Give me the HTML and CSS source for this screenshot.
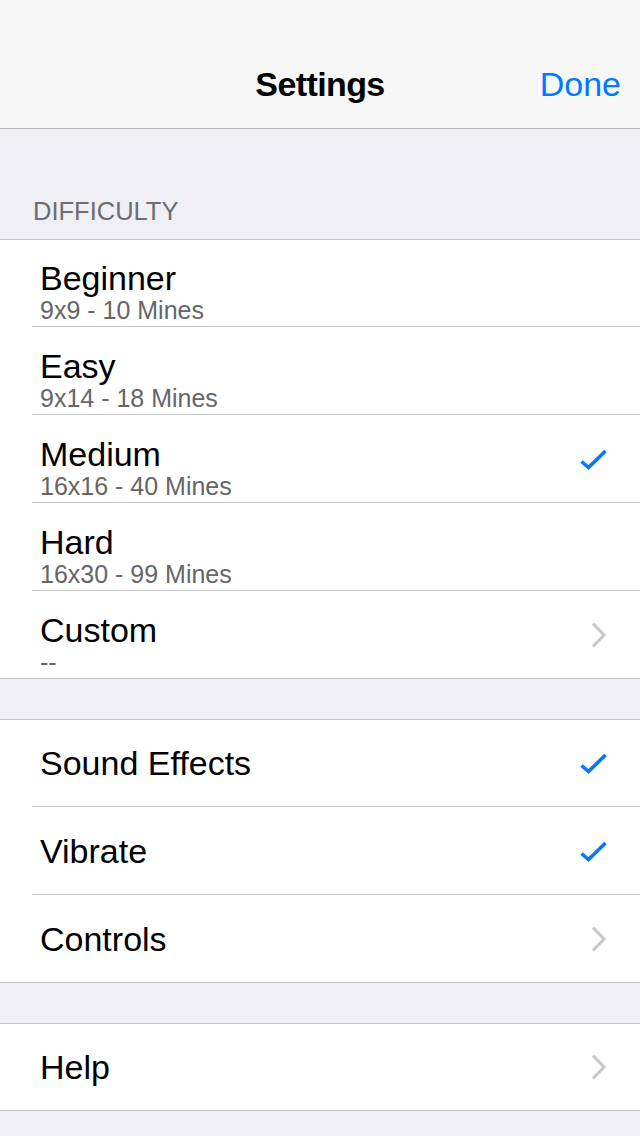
FILE: index.html
```html
<!DOCTYPE html>
<html>
<head>
<meta charset="utf-8">
<title>Settings</title>
<link rel="stylesheet" href="styles.css">
</head>
<body>
<header class="navbar">
  <div class="nav-side"></div>
  <div class="nav-title">Settings</div>
  <div class="nav-side nav-right"><span class="nav-btn">Done</span></div>
</header>

<div class="section-header"><span>DIFFICULTY</span></div>
<ul class="group">
  <li class="row row-sub">
    <div class="cell-text"><div class="title">Beginner</div><div class="subtitle">9x9 - 10 Mines</div></div>
  </li>
  <li class="row row-sub">
    <div class="cell-text"><div class="title">Easy</div><div class="subtitle">9x14 - 18 Mines</div></div>
  </li>
  <li class="row row-sub">
    <div class="cell-text"><div class="title">Medium</div><div class="subtitle">16x16 - 40 Mines</div></div>
    <svg class="check" width="30" height="22" viewBox="0 0 30 22"><path d="M1.5 13.5 L8.5 19.5 L25.5 3" fill="none" stroke="#007aff" stroke-width="3.6"/></svg>
  </li>
  <li class="row row-sub">
    <div class="cell-text"><div class="title">Hard</div><div class="subtitle">16x30 - 99 Mines</div></div>
  </li>
  <li class="row row-sub">
    <div class="cell-text"><div class="title">Custom</div><div class="subtitle">--</div></div>
    <svg class="chev" width="18" height="28" viewBox="0 0 18 28"><path d="M3 2.5 L14 14 L3 25.5" fill="none" stroke="#c7c7cc" stroke-width="3"/></svg>
  </li>
</ul>

<div class="spacer"></div>
<ul class="group">
  <li class="row">
    <div class="title">Sound Effects</div>
    <svg class="check" width="30" height="22" viewBox="0 0 30 22"><path d="M1.5 13.5 L8.5 19.5 L25.5 3" fill="none" stroke="#007aff" stroke-width="3.6"/></svg>
  </li>
  <li class="row">
    <div class="title">Vibrate</div>
    <svg class="check" width="30" height="22" viewBox="0 0 30 22"><path d="M1.5 13.5 L8.5 19.5 L25.5 3" fill="none" stroke="#007aff" stroke-width="3.6"/></svg>
  </li>
  <li class="row">
    <div class="title">Controls</div>
    <svg class="chev" width="18" height="28" viewBox="0 0 18 28"><path d="M3 2.5 L14 14 L3 25.5" fill="none" stroke="#c7c7cc" stroke-width="3"/></svg>
  </li>
</ul>

<div class="spacer"></div>
<ul class="group">
  <li class="row">
    <div class="title">Help</div>
    <svg class="chev" width="18" height="28" viewBox="0 0 18 28"><path d="M3 2.5 L14 14 L3 25.5" fill="none" stroke="#c7c7cc" stroke-width="3"/></svg>
  </li>
</ul>
</body>
</html>
```

FILE: styles.css
```css
html, body {
  margin: 0;
  padding: 0;
  background: #efeff4;
  font-family: "Liberation Sans", Arial, sans-serif;
  color: #000;
}

.navbar {
  box-sizing: border-box;
  height: 129px;
  padding-top: 40px;
  background: #f7f7f7;
  border-bottom: 1px solid #b2b2b2;
  display: grid;
  grid-template-columns: 1fr auto 1fr;
  align-items: center;
}

.nav-title {
  font-size: 34px;
  font-weight: bold;
  letter-spacing: -0.6px;
  line-height: 40px;
}

.nav-right {
  display: flex;
  justify-content: flex-end;
  padding-right: 19px;
}

.nav-btn {
  font-size: 34px;
  line-height: 40px;
  color: #007aff;
}

.section-header {
  box-sizing: border-box;
  height: 110px;
  display: flex;
  align-items: flex-end;
  padding: 0 0 13px 33px;
  font-size: 25.5px;
  line-height: 30px;
  color: #6d6d72;
}

.group {
  list-style: none;
  margin: 0;
  padding: 0;
  background: #fff;
  box-shadow: inset 0 1px 0 #c8c7cc, inset 0 -1px 0 #c8c7cc;
}

.row {
  box-sizing: border-box;
  height: 88px;
  margin-left: 32px;
  padding: 0 32px 0 8px;
  display: flex;
  align-items: center;
  justify-content: space-between;
  border-bottom: 1px solid #c8c7cc;
}

.row:last-child {
  border-bottom: none;
}

.row-sub .cell-text {
  align-self: flex-start;
  margin-top: 20px;
}

.title {
  font-size: 34px;
  line-height: 38px;
}

.subtitle {
  font-size: 25px;
  line-height: 26px;
  color: #666;
}

.check {
  display: block;
  margin-right: -2px;
}

.chev {
  display: block;
}

.spacer {
  height: 40px;
}
```
